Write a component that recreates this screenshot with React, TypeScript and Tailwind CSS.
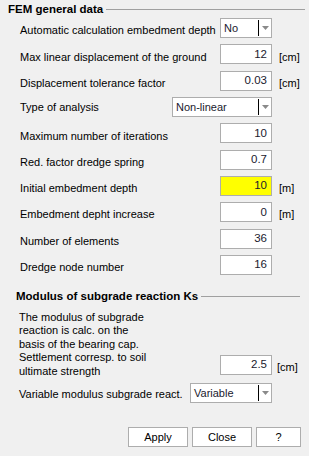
import React from 'react'

const font = { fontFamily: '"Liberation Sans", Arial, sans-serif' }

const Field: React.FC<{ value: string; yellow?: boolean }> = ({ value, yellow }) => (
  <div
    className={`w-[52px] h-[20px] border border-[#adadad] flex items-center justify-end pr-[4px] text-[11.5px] text-[#1a1a2e] ${
      yellow ? 'bg-[#ffff00]' : 'bg-white'
    }`}
  >
    {value}
  </div>
)

const Combo: React.FC<{ value: string; width: string }> = ({ value, width }) => (
  <div className={`${width} h-[20px] border border-[#adadad] bg-white flex items-center text-[11px] text-[#1a1a2e]`}>
    <span className="flex-1 pl-[3px]">{value}</span>
    <span className="w-px h-[16px] bg-black" />
    <span className="w-[12px] flex items-center justify-center">
      <svg width="7" height="4" viewBox="0 0 7 4">
        <path d="M0 0h7L3.5 4z" fill="#8a8a8a" />
      </svg>
    </span>
  </div>
)

const Row: React.FC<{ label: string; children: React.ReactNode; unit?: string }> = ({ label, children, unit }) => (
  <div className="h-[26.3px] flex items-center">
    <div className="flex-1 pl-[20px] pt-[5px] text-[11px] text-black whitespace-nowrap">{label}</div>
    <div className="w-[52px] flex justify-end">{children}</div>
    <div className="w-[37px] pl-[7px] pt-[5px] text-[11px] text-black">{unit}</div>
  </div>
)

export default function App() {
  return (
    <div className="w-[309px] h-[456px] bg-[#f0f0f0] overflow-hidden" style={font}>
      <div className="h-[17px] flex items-center pl-[8px] pr-[4px] pt-[2px]">
        <span className="text-[11.5px] font-bold text-black">FEM general data</span>
        <span className="flex-1 h-px bg-[#a0a0a0] ml-[3px]" />
      </div>
      <div className="mt-[-2px]">
        <Row label="Automatic calculation embedment depth">
          <Combo value="No" width="w-[52px]" />
        </Row>
        <Row label="Max linear displacement of the ground" unit="[cm]">
          <Field value="12" />
        </Row>
        <Row label="Displacement tolerance factor" unit="[cm]">
          <Field value="0.03" />
        </Row>
        <div className="h-[26.3px] flex items-center">
          <div className="flex-1 pl-[20px] text-[11px] text-black">Type of analysis</div>
          <Combo value="Non-linear" width="w-[100px]" />
          <div className="w-[37px]" />
        </div>
        <Row label="Maximum number of iterations">
          <Field value="10" />
        </Row>
        <Row label="Red. factor dredge spring">
          <Field value="0.7" />
        </Row>
        <Row label="Initial embedment depth" unit="[m]">
          <Field value="10" yellow />
        </Row>
        <Row label="Embedment depht increase" unit="[m]">
          <Field value="0" />
        </Row>
        <Row label="Number of elements">
          <Field value="36" />
        </Row>
        <Row label="Dredge node number">
          <Field value="16" />
        </Row>
      </div>

      <div className="h-[14px] flex items-center pl-[16px] pr-[9px] mt-[12px]">
        <span className="text-[11.5px] font-bold text-black">Modulus of subgrade reaction Ks</span>
        <span className="flex-1 h-px bg-[#a0a0a0] ml-[3px]" />
      </div>
      <div className="flex items-end mt-[7px]">
        <p className="flex-1 pl-[19px] text-[11px] leading-[13.4px] text-black">
          The modulus of subgrade
          <br />
          reaction is calc. on the
          <br />
          basis of the bearing cap.
          <br />
          Settlement corresp. to soil
          <br />
          ultimate strength
        </p>
        <div className="mb-[3px]">
          <Field value="2.5" />
        </div>
        <div className="w-[37px] pl-[5px] mb-[3px] text-[11px] text-black">[cm]</div>
      </div>
      <div className="flex items-center mt-[5px]">
        <div className="flex-1 pl-[19px] pt-[3px] text-[11px] text-black whitespace-nowrap">Variable modulus subgrade react.</div>
        <Combo value="Variable" width="w-[82px]" />
        <div className="w-[37px]" />
      </div>

      <div className="flex justify-end gap-[4px] pr-[8px] mt-[24px]">
        <button className="w-[60px] h-[20px] border border-[#adadad] bg-white text-[11px] text-black">Apply</button>
        <button className="w-[60px] h-[20px] border border-[#adadad] bg-white text-[11px] text-black">Close</button>
        <button className="w-[45px] h-[20px] border border-[#adadad] bg-white text-[11px] text-black">?</button>
      </div>
    </div>
  )
}
